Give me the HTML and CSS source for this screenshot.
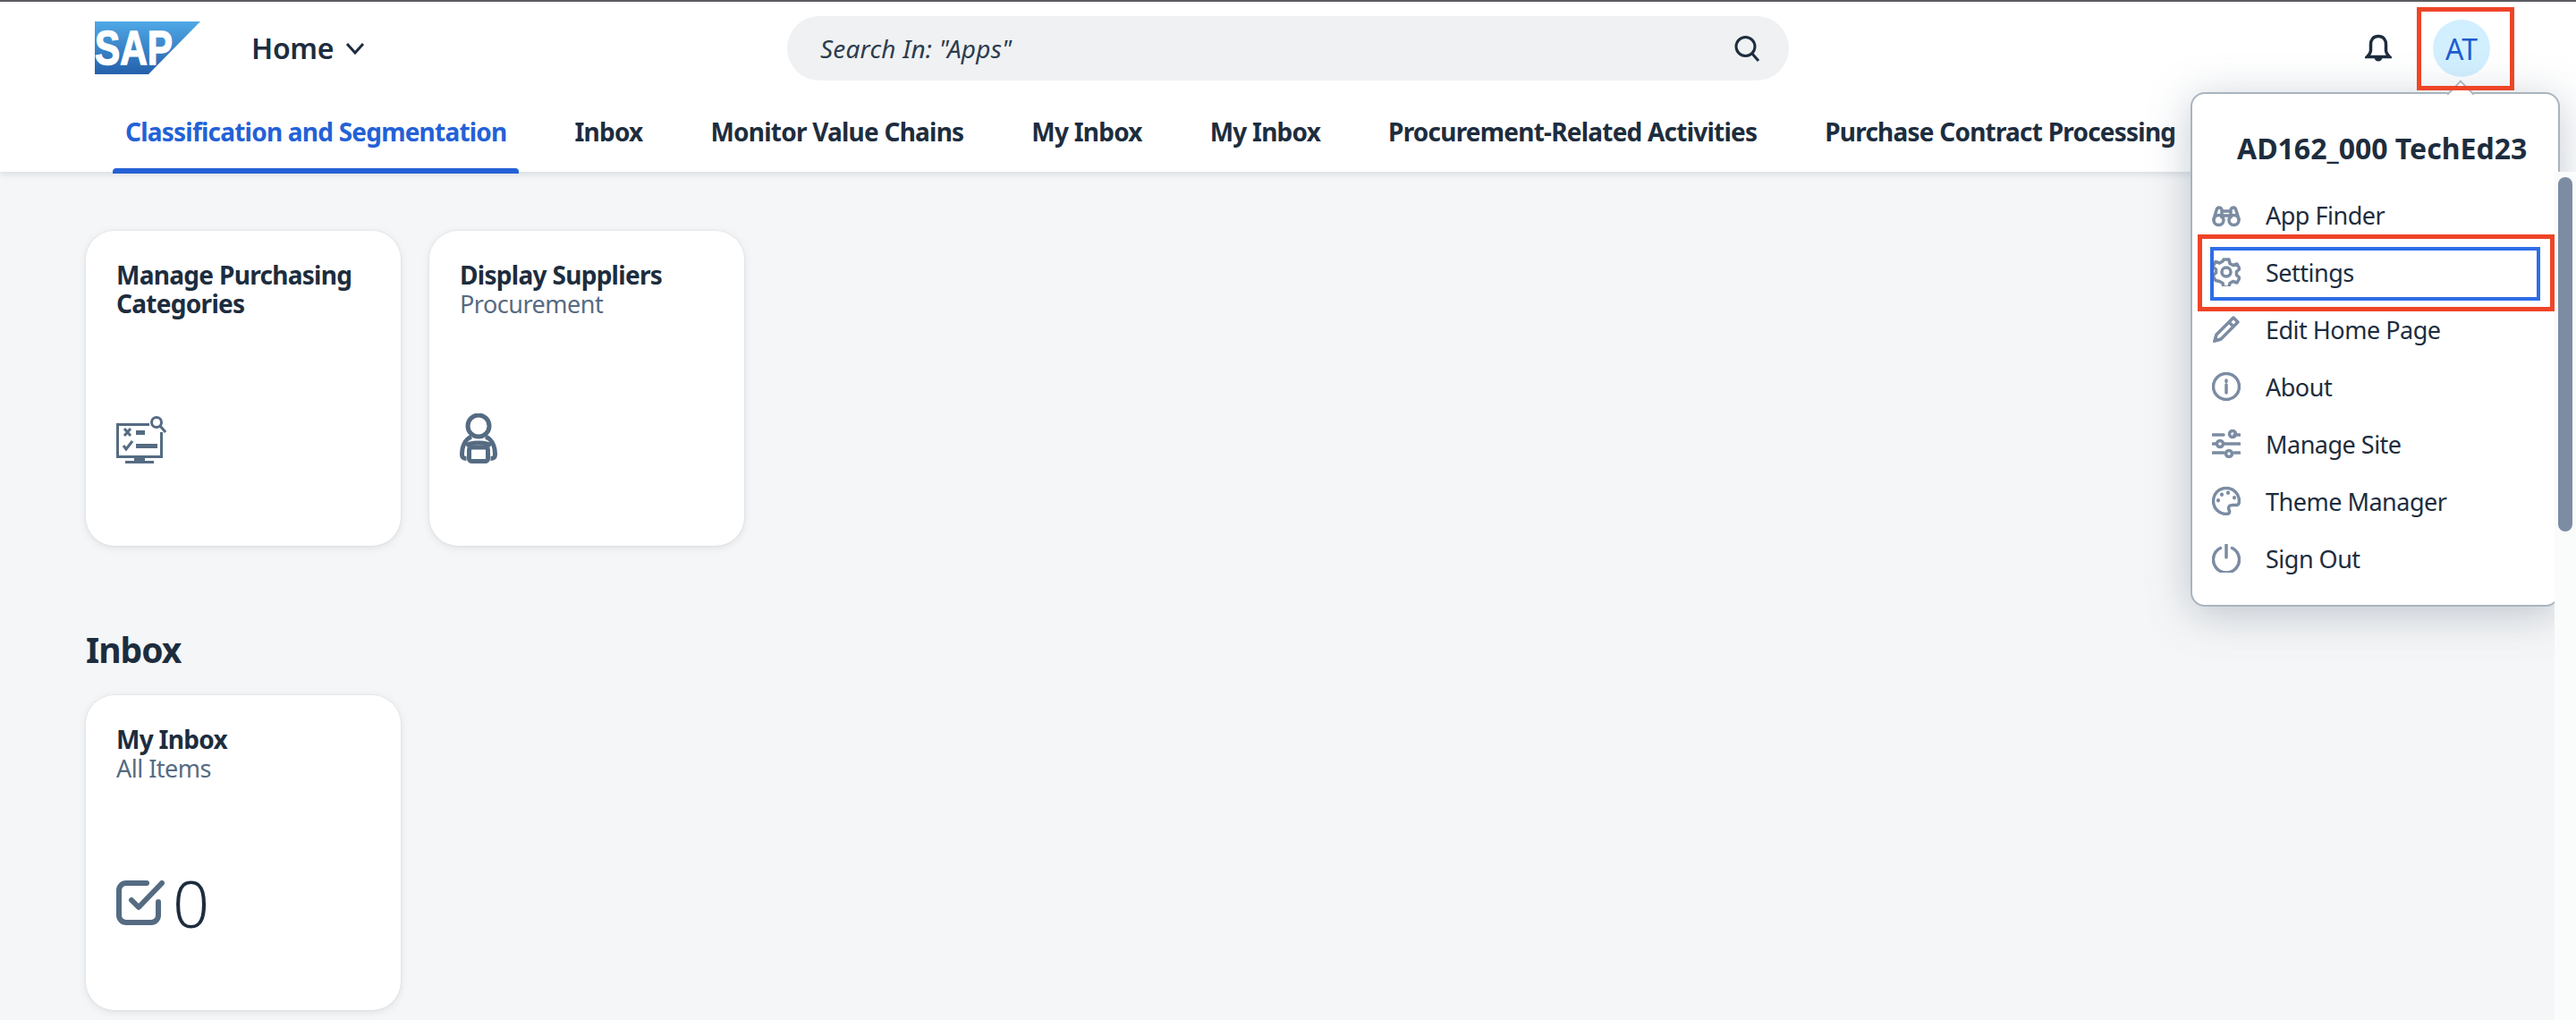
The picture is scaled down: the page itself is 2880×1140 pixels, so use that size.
FILE: index.html
```html
<!DOCTYPE html>
<html lang="en">
<head>
    <meta name="viewport" content="width=device-width, initial-scale=1">
    <title>Home</title>
    <link rel="stylesheet" href="styles.css">
</head>
<body>
    <header class="shell">
        <div class="topbar">
            <div class="brand">
                <svg class="logo" viewBox="0 0 118 59">
                    <defs>
                        <linearGradient id="sapBlue" x1="0" y1="0" x2="0" y2="1">
                            <stop offset="0" stop-color="#4fa9e6"/>
                            <stop offset="1" stop-color="#2460ab"/>
                        </linearGradient>
                    </defs>
                    <polygon points="0,0 118,0 60,59 0,59" fill="url(#sapBlue)"/>
                    <text x="0" y="48" class="logo-text" textLength="87" lengthAdjust="spacingAndGlyphs">SAP</text>
                </svg>
                <span class="home">Home</span>
                <svg class="chevron" viewBox="0 0 22 14"><path d="M2 2l9 10 9-10"/></svg>
            </div>
            <div class="search">
                <span class="search-text">Search In: "Apps"</span>
                <svg class="search-icon" viewBox="0 0 30 30"><circle cx="13.5" cy="13" r="10.5"/><path d="M21 21l7 8"/></svg>
            </div>
            <div class="actions">
                <svg class="bell" viewBox="0 0 30 32"><path d="M15 2.500c-5.500 0-8.500 4-8.500 9.500v6c0 3-1.500 5-4 7.500h25c-2.500-2.500-4-4.500-4-7.500v-6c0-5.500-3-9.500-8.500-9.500z"/><path class="bell-clap" d="M10.500 26.500h9c-.5 2.500-2.200 4-4.500 4s-4-1.500-4.500-4z"/></svg>
                <div class="avatar">AT</div>
            </div>
        </div>
        <nav class="tabs">
            <a class="tab tab-active">Classification and Segmentation</a>
            <a class="tab">Inbox</a>
            <a class="tab">Monitor Value Chains</a>
            <a class="tab">My Inbox</a>
            <a class="tab">My Inbox</a>
            <a class="tab">Procurement-Related Activities</a>
            <a class="tab">Purchase Contract Processing</a>
        </nav>
    </header>

    <main class="content">
        <section class="tiles">
            <article class="tile">
                <h3 class="tile-title">Manage Purchasing Categories</h3>
                <div class="tile-foot">
                    <svg class="icon-catalog" viewBox="0 0 56 53">
                        <path class="solid" d="M0 8h37v3H3v33h46V18h3v29H32v3h10v3H10v-3h10v-3H0z"/>
                        <path class="line" d="M9 14l7 8M16 14l-7 8M8 33l3 4 7-9"/>
                        <path class="solid" d="M22 16h10v5H22zM22 31h24v5H22z"/>
                        <circle class="line" cx="45" cy="7" r="5.500"/>
                        <path class="line" d="M49 11l6 7"/>
                    </svg>
                </div>
            </article>
            <article class="tile">
                <h3 class="tile-title">Display Suppliers</h3>
                <p class="tile-sub">Procurement</p>
                <div class="tile-foot">
                    <svg class="icon-supplier" viewBox="0 0 42 56">
                        <ellipse cx="21" cy="14" rx="12" ry="12"/>
                        <path d="M13 26C6 29 2.500 37 2.500 46c0 3 1 4.500 5 4.500M29 26c7 3 10.500 11 10.500 20 0 3-1 4.500-5 4.500"/>
                        <path d="M7 36c5-4 23-4 28 0"/>
                        <rect x="10.500" y="38" width="21" height="15.500" rx="3"/>
                    </svg>
                </div>
            </article>
        </section>

        <h2 class="section-title">Inbox</h2>

        <section class="tiles">
            <article class="tile">
                <h3 class="tile-title">My Inbox</h3>
                <p class="tile-sub">All Items</p>
                <div class="tile-foot tile-foot-count">
                    <svg class="icon-check" viewBox="0 0 54 50">
                        <path d="M34 3H11a8 8 0 0 0-8 8v28a8 8 0 0 0 8 8h28a8 8 0 0 0 8-8V24"/>
                        <path d="M17 22l8 8L51 3"/>
                    </svg>
                    <span class="count">0</span>
                </div>
            </article>
        </section>
    </main>

    <aside class="popover">
        <span class="popover-arrow"></span>
        <h4 class="popover-title">AD162_000 TechEd23</h4>
        <ul class="menu">
            <li class="menu-item">
                <svg class="menu-icon" viewBox="0 0 32 32"><circle cx="7.500" cy="22" r="5.500"/><circle cx="24.500" cy="22" r="5.500"/><path d="M2 21l3-10c.5-2 1.500-3 3-3s3 1 3 3v8M30 21l-3-10c-.5-2-1.500-3-3-3s-3 1-3 3v8M11 17h10M11 12h10"/></svg>
                App Finder
            </li>
            <li class="menu-item">
                <svg class="menu-icon" viewBox="0 0 32 32"><circle cx="16" cy="16" r="5"/><path d="M13 2h6l1 4.500 3.500 2 4.500-1.500 3 5.500-3.500 3v4l3.500 3-3 5.500-4.500-1.500-3.500 2-1 4.500h-6l-1-4.500-3.500-2L4 25.500 1 20l3.500-3v-4L1 10l3-5.500 4.500 1.500 3.500-2z"/></svg>
                Settings
            </li>
            <li class="menu-item">
                <svg class="menu-icon" viewBox="0 0 32 32"><path d="M3 29l2-7L24 3l5 5-19 19zM19 8l5 5"/><path class="tip" d="M1 31l2-8 6 6z"/></svg>
                Edit Home Page
            </li>
            <li class="menu-item">
                <svg class="menu-icon" viewBox="0 0 32 32"><circle cx="16" cy="16" r="14.500"/><path d="M16 14v9M16 9v1.500"/></svg>
                About
            </li>
            <li class="menu-item">
                <svg class="menu-icon" viewBox="0 0 32 32"><path d="M1 6h12M25 6h6M1 16h3M14 16h17M1 26h12M25 26h6"/><circle cx="23" cy="5" r="3.500"/><circle cx="9" cy="16" r="3.500"/><circle cx="19" cy="27" r="3.500"/></svg>
                Manage Site
            </li>
            <li class="menu-item">
                <svg class="menu-icon" viewBox="0 0 32 32"><path d="M16 1.500C7.500 1.500 1.500 8 1.500 16S8 30.500 16 30.500c3 0 4-1.500 3.500-3.500-.5-2-2-3 0-5.500 2-2 6-.5 8.500-1 2-.5 2.500-2 2.500-4.500 0-8-6.500-14.500-14.500-14.500z"/><path class="dots" d="M7 15v.5M11 8.500V9M18 6.500V7M25 12v.5"/></svg>
                Theme Manager
            </li>
            <li class="menu-item">
                <svg class="menu-icon" viewBox="0 0 32 32"><path d="M9.500 4.500a14.500 14.500 0 1 0 13 0"/><path d="M16 1v14"/></svg>
                Sign Out
            </li>
        </ul>
    </aside>

    <div class="scrollbar"><span class="scrollbar-thumb"></span></div>

    <span class="mark mark-avatar"></span>
    <span class="mark mark-settings"></span>
    <span class="focus-ring"></span>
</body>
</html>
```

FILE: styles.css
```css
html, body {
    height: 100%;
}

body {
    margin: 0;
    background-color: #f5f6f7;
    color: #1d2d3e;
    font-family: "Noto Sans", sans-serif;
    overflow: hidden;
    position: relative;
}

/* header */
.shell {
    height: 192px;
    box-sizing: border-box;
    background-color: #fff;
    border-top: 2px solid #5b5b60;
    box-shadow: 0 2px 8px rgba(85, 107, 130, 0.2);
    position: relative;
    display: flex;
    flex-direction: column;
}

.topbar {
    height: 106px;
    display: flex;
    align-items: flex-start;
    padding-left: 106px;
}

.brand {
    width: 774px;
    display: flex;
    align-items: center;
    padding-top: 22px;
}

.logo {
    width: 118px;
    height: 59px;
    display: block;
}

.logo-text {
    fill: #fff;
    stroke: #fff;
    stroke-width: 1.500;
    font-family: "Liberation Sans", sans-serif;
    font-weight: 700;
    font-size: 54px;
}

.home {
    margin-left: 57px;
    font-size: 32px;
    font-weight: 600;
    letter-spacing: -0.3px;
}

.chevron {
    width: 22px;
    height: 14px;
    margin-left: 13px;
    fill: none;
    stroke: #1d2d3e;
    stroke-width: 3;
}

.search {
    width: 1120px;
    height: 72px;
    margin-top: 16px;
    box-sizing: border-box;
    padding: 0 32px 0 37px;
    border-radius: 36px;
    background-color: #eff1f2;
    display: flex;
    align-items: center;
    justify-content: space-between;
}

.search-text {
    font-size: 28px;
    font-style: italic;
    letter-spacing: 0.2px;
    color: #2c3c4e;
}

.search-icon {
    width: 30px;
    height: 30px;
    fill: none;
    stroke: #1d2d3e;
    stroke-width: 3;
}

.actions {
    margin-left: 644px;
    margin-top: 20px;
    display: flex;
    align-items: center;
    gap: 46px;
}

.bell {
    width: 30px;
    height: 32px;
    fill: none;
    stroke: #1d2d3e;
    stroke-width: 3.500;
}

.bell-clap {
    fill: #1d2d3e;
    stroke: none;
}

.avatar {
    width: 64px;
    height: 64px;
    border-radius: 50%;
    background-color: #d1efff;
    color: #1f5ccf;
    font-size: 32px;
    display: flex;
    align-items: center;
    justify-content: center;
}

.tabs {
    display: flex;
    padding-left: 126px;
    gap: 48px;
}

.tab {
    height: 84px;
    box-sizing: border-box;
    padding: 19px 14px 0;
    font-size: 28px;
    line-height: 40px;
    font-weight: 700;
    letter-spacing: -0.78px;
    white-space: nowrap;
    position: relative;
}

.tab-active {
    color: #2461d6;
}

.tab-active::after {
    content: "";
    position: absolute;
    left: 0;
    right: 0;
    bottom: -2px;
    height: 6px;
    border-radius: 4px 4px 0 0;
    background-color: #2461d6;
}

/* tiles */
.content {
    padding: 66px 0 0 96px;
}

.tiles {
    display: flex;
    gap: 32px;
}

.tile {
    width: 352px;
    height: 352px;
    box-sizing: border-box;
    padding: 33px 34px 92px;
    border-radius: 32px;
    background-color: #fff;
    box-shadow: 0 0 2px rgba(85, 107, 130, 0.15), 0 2px 8px rgba(85, 107, 130, 0.15);
    display: flex;
    flex-direction: column;
}

.tile-title {
    margin: 0;
    font-size: 28px;
    line-height: 32px;
    font-weight: 700;
    letter-spacing: -0.7px;
}

.tile-sub {
    margin: 1px 0 0;
    font-size: 27px;
    line-height: 32px;
    letter-spacing: -0.5px;
    color: #556b82;
}

.tile-foot {
    margin-top: auto;
    display: flex;
    align-items: flex-end;
}

.tile-foot-count {
    align-items: center;
    gap: 9px;
    margin-bottom: -6px;
}

.icon-catalog {
    width: 56px;
    height: 53px;
}

.icon-catalog .solid {
    fill: #556b82;
}

.icon-catalog .line {
    fill: none;
    stroke: #556b82;
    stroke-width: 3;
}

.icon-supplier {
    width: 42px;
    height: 56px;
    fill: none;
    stroke: #556b82;
    stroke-width: 5;
}

.icon-check {
    width: 54px;
    height: 50px;
    fill: none;
    stroke: #556b82;
    stroke-width: 6;
    stroke-linecap: round;
    stroke-linejoin: round;
}

.count {
    font-size: 72px;
    line-height: 68px;
    font-weight: 300;
}

.section-title {
    margin: 0;
    padding: 89px 0 24px;
    font-size: 39px;
    line-height: 54px;
    font-weight: 700;
    letter-spacing: -1px;
}

/* user menu */
.popover {
    position: absolute;
    left: 2449px;
    top: 103px;
    width: 413px;
    height: 575px;
    box-sizing: border-box;
    border: 2px solid #a9b4be;
    border-radius: 16px;
    background-color: #fff;
    box-shadow: 0 8px 48px rgba(85, 107, 130, 0.35);
}

.popover-arrow {
    position: absolute;
    left: 289px;
    top: -11px;
    width: 20px;
    height: 20px;
    background-color: #fff;
    border-top: 2px solid #a9b4be;
    border-left: 2px solid #a9b4be;
    transform: rotate(45deg);
}

.popover-title {
    margin: 0;
    padding: 39px 0 0 50px;
    font-size: 32px;
    line-height: 44px;
    font-weight: 700;
    white-space: nowrap;
}

.menu {
    list-style: none;
    margin: 20px 0 0;
    padding: 0;
}

.menu-item {
    height: 64px;
    display: flex;
    align-items: center;
    gap: 28px;
    padding-left: 22px;
    font-size: 27px;
    letter-spacing: -0.5px;
}

.menu-icon {
    width: 32px;
    height: 32px;
    flex-shrink: 0;
    fill: none;
    stroke: #7b8ca3;
    stroke-width: 3.500;
    stroke-linejoin: round;
    stroke-linecap: round;
}

.menu-icon .dots {
    stroke-width: 4;
}

.menu-icon .tip {
    fill: #7b8ca3;
    stroke: none;
}

/* page scrollbar */
.scrollbar {
    position: absolute;
    left: 2856px;
    top: 192px;
    bottom: 0;
    width: 24px;
    background-color: #fafbfb;
}

.scrollbar-thumb {
    position: absolute;
    left: 4px;
    top: 6px;
    width: 16px;
    height: 396px;
    border-radius: 8px;
    background-color: #7b8ca3;
}

/* annotations drawn over the screenshot */
.mark {
    position: absolute;
    box-sizing: border-box;
    border: 5px solid #ef4427;
}

.mark-avatar {
    left: 2702px;
    top: 8px;
    width: 109px;
    height: 93px;
}

.mark-settings {
    left: 2457px;
    top: 262px;
    width: 399px;
    height: 86px;
}

.focus-ring {
    position: absolute;
    left: 2471px;
    top: 276px;
    width: 369px;
    height: 60px;
    box-sizing: border-box;
    border: 4px solid #2f6de8;
}
```
